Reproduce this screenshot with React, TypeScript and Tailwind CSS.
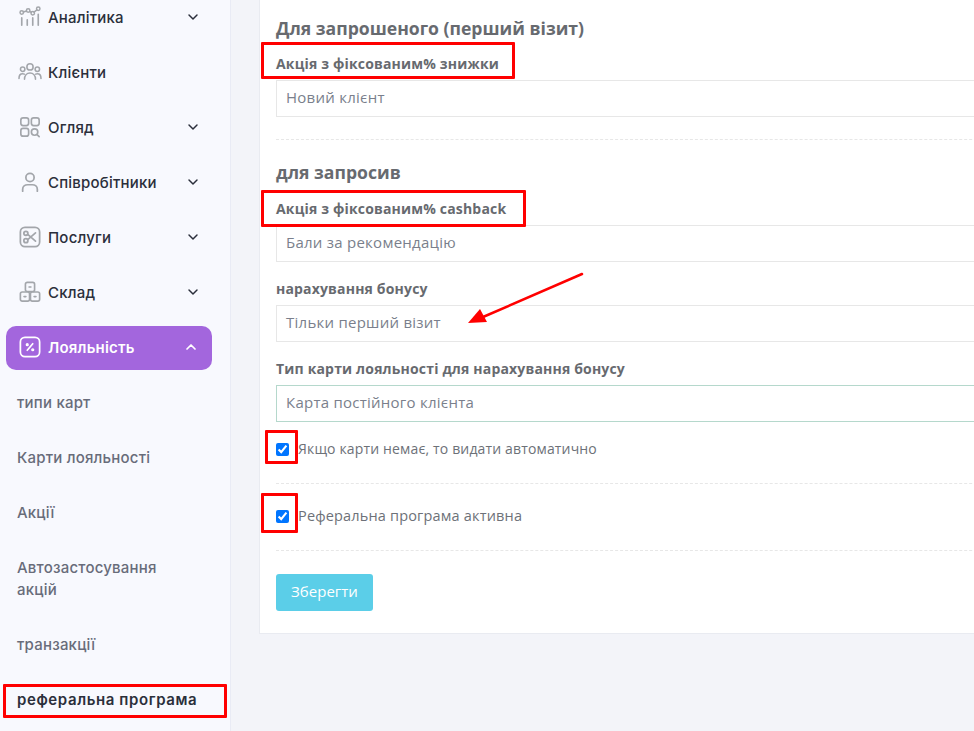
import { ChevronDown, ChevronUp } from "lucide-react";
import type { ReactNode } from "react";

const iconClass = "h-[22px] w-[22px] shrink-0";

function Analytics() {
  return (
    <svg viewBox="0 0 24 24" fill="none" stroke="#a3a6ab" strokeWidth="1.6" strokeLinecap="round" className={iconClass}>
      <circle cx="3" cy="7" r="1.9" />
      <circle cx="10" cy="5" r="1.9" />
      <circle cx="15" cy="8" r="1.9" />
      <circle cx="21" cy="3" r="1.9" />
      <path d="M4.8 6.5 8.2 5.5M11.7 6 13.4 7M16.4 6.7 19.5 4.2" />
      <path d="M3 13v8M9 15v6M15 13v8M21 9v12" strokeWidth="1.8" />
    </svg>
  );
}

function Clients() {
  return (
    <svg viewBox="0 0 26 24" fill="none" stroke="#a3a6ab" strokeWidth="1.7" strokeLinecap="round" className="-mx-[2px] h-[22px] w-[26px] shrink-0">
      <circle cx="13" cy="6.5" r="3.4" />
      <circle cx="5" cy="9" r="2.4" />
      <circle cx="21" cy="9" r="2.4" />
      <path d="M7 20c0-4 2.5-7 6-7s6 3 6 7" />
      <path d="M1 19c0-3 1.500-5 4-5 .7 0 1.300.1 1.800.4M25 19c0-3-1.500-5-4-5-.7 0-1.300.1-1.800.4" />
    </svg>
  );
}

function Overview() {
  return (
    <svg viewBox="0 0 24 24" fill="none" stroke="#a3a6ab" strokeWidth="1.8" strokeLinecap="round" className={iconClass}>
      <rect x="2" y="2" width="8.500" height="8.500" rx="2.500" />
      <rect x="13.500" y="2" width="8.500" height="8.500" rx="2.500" />
      <rect x="2" y="13.500" width="8.500" height="8.500" rx="2.500" />
      <circle cx="17" cy="17.500" r="3.500" />
      <path d="m20 20.500 2 2" />
    </svg>
  );
}

function Staff() {
  return (
    <svg viewBox="0 0 24 24" fill="none" stroke="#a3a6ab" strokeWidth="1.9" strokeLinecap="round" className={iconClass}>
      <circle cx="12" cy="7" r="4.500" />
      <path d="M4 22v-2c0-3 2.500-5 5.500-5h5c3 0 5.500 2 5.500 5v2" />
    </svg>
  );
}

function Services() {
  return (
    <svg viewBox="0 0 24 24" fill="none" stroke="#a3a6ab" strokeWidth="1.9" strokeLinecap="round" className={iconClass}>
      <rect x="1.500" y="1.500" width="21" height="21" rx="5" />
      <circle cx="7.500" cy="8" r="2.200" />
      <circle cx="7.500" cy="16" r="2.200" />
      <path d="M9.500 9.200 18 16.500M9.500 14.800 18 7.500" />
    </svg>
  );
}

function Stock() {
  return (
    <svg viewBox="0 0 24 24" fill="none" stroke="#a3a6ab" strokeWidth="1.800" strokeLinecap="round" className={iconClass}>
      <rect x="7" y="1.500" width="10" height="10" rx="2" />
      <rect x="1.500" y="12" width="10" height="10" rx="2" />
      <rect x="12.500" y="12" width="10" height="10" rx="2" />
      <path d="M11 6.500h2M5.500 17h2M16.500 17h2" />
    </svg>
  );
}

function Loyalty() {
  return (
    <svg viewBox="0 0 24 24" fill="none" stroke="#fff" strokeWidth="1.900" strokeLinecap="round" className={iconClass}>
      <rect x="1.500" y="1.500" width="21" height="21" rx="5" />
      <path d="m9 15.500 6-7" />
      <circle cx="9" cy="9.500" r=".8" />
      <circle cx="15" cy="15" r=".8" />
    </svg>
  );
}

const menu: { label: string; icon: ReactNode; chevron: boolean }[] = [
  { label: "Аналітика", icon: <Analytics />, chevron: true },
  { label: "Клієнти", icon: <Clients />, chevron: false },
  { label: "Огляд", icon: <Overview />, chevron: true },
  { label: "Співробітники", icon: <Staff />, chevron: true },
  { label: "Послуги", icon: <Services />, chevron: true },
  { label: "Склад", icon: <Stock />, chevron: true },
];

const subItems = ["типи карт", "Карти лояльності", "Акції", "Автозастосування акцій", "транзакції"];

function Sidebar() {
  return (
    <aside className="w-[231px] shrink-0 border-r border-[#e9ebf5] bg-[#f8f9fe] pl-[6px] pr-[18px] font-['Inter',sans-serif] text-[15px] tracking-[0.2px]">
      <div className="-mt-[4px] flex flex-col gap-[11px]">
        {menu.map((item) => (
          <div key={item.label} className="flex h-[44px] items-center gap-[7px] pb-[2px] pl-[13px] pr-[11px] font-medium text-[#2b2f3b]">
            {item.icon}
            <span className="flex-1 pt-[2px]">{item.label}</span>
            {item.chevron && <ChevronDown className="h-[16px] w-[16px] text-[#2b2f3b]" strokeWidth={2.2} />}
          </div>
        ))}
        <div className="flex h-[44px] items-center gap-[7px] rounded-[10px] bg-[#a366dd] pb-[2px] pl-[13px] pr-[13px] font-semibold text-white">
          <Loyalty />
          <span className="flex-1 pt-[2px]">Лояльність</span>
          <ChevronUp className="h-[16px] w-[16px]" strokeWidth={2.6} />
        </div>
      </div>
      <ul className="mt-[11px] flex flex-col gap-[11px] font-medium text-[#686c7a]">
        {subItems.map((item) => (
          <li key={item} className="py-[11px] pl-[11px] pr-[20px] leading-[22px]">
            {item}
          </li>
        ))}
        <li className="py-[11px] pl-[11px] leading-[22px] font-semibold tracking-[0.6px] text-[#2b2f3b] whitespace-nowrap">
          реферальна програма
        </li>
      </ul>
    </aside>
  );
}

function Field({ label, value, tinted }: { label: string; value: string; tinted?: boolean }) {
  return (
    <div>
      <label className="block text-[14px] leading-[20px] font-bold tracking-[0.17px] text-[#676a6f]">{label}</label>
      <div
        className={`mt-[6px] flex h-[37px] items-center border bg-white pb-[2px] pl-[9px] text-[15px] tracking-[0.25px] text-[#7a7f8c] ${
          tinted ? "border-[#b5d8cc]" : "border-[#e7e7e7]"
        }`}
      >
        {value}
      </div>
    </div>
  );
}

function Check({ label, className, textClass }: { label: string; className: string; textClass?: string }) {
  return (
    <label className={`flex h-[20px] items-center text-[#6d7178] ${className}`}>
      <input type="checkbox" defaultChecked className="m-0 mr-[9px] h-[13px] w-[13px] accent-[#0075ff]" />
      <span className={textClass}>{label}</span>
    </label>
  );
}

function Divider() {
  return <div className="border-t border-dashed border-[#e7e7e7]" />;
}

function Annotation({ className }: { className: string }) {
  return <div className={`absolute rounded-[1px] border-[3px] border-[#ff0000] ${className}`} />;
}

export default function App() {
  return (
    <div className="relative flex h-[731px] w-[974px] overflow-hidden bg-[#f3f4f9] font-['Open_Sans',sans-serif]">
      <Sidebar />
      <main className="min-w-0 flex-1 pl-[28px]">
        <section className="-mt-[1px] w-[800px] border border-t-0 border-[#e9ebf1] bg-white px-[16px] pt-[17px] pb-[22px]">
          <h2 className="text-[17.6px] leading-[24px] font-bold text-[#676a6f]">Для запрошеного (перший візит)</h2>
          <div className="mt-[14px]">
            <Field label="Акція з фіксованим% знижки" value="Новий клієнт" />
          </div>
          <div className="mt-[22px]">
            <Divider />
          </div>
          <h2 className="mt-[20px] text-[17.6px] leading-[24px] font-bold text-[#676a6f]">для запросив</h2>
          <div className="mt-[15px] flex flex-col gap-[17px]">
            <Field label="Акція з фіксованим% cashback" value="Бали за рекомендацію" />
            <Field label="нарахування бонусу" value="Тільки перший візит" />
            <Field label="Тип карти лояльності для нарахування бонусу" value="Карта постійного клієнта" tinted />
          </div>
          <div className="mt-[17px]">
            <Check label="Якщо карти немає, то видати автоматично" className="text-[14px] tracking-[0.15px]" textClass="pb-[2px]" />
          </div>
          <div className="mt-[24px]">
            <Divider />
          </div>
          <div className="mt-[22px]">
            <Check label="Реферальна програма активна" className="text-[14.5px] tracking-[0.17px]" />
          </div>
          <div className="mt-[24px]">
            <Divider />
          </div>
          <button className="mt-[23px] h-[37px] w-[97px] rounded-[3px] bg-[#5bcee8] pb-[2px] text-[15px] text-white">
            Зберегти
          </button>
        </section>
      </main>

      <Annotation className="left-[261px] top-[42px] h-[37px] w-[254px]" />
      <Annotation className="left-[261px] top-[190px] h-[37px] w-[265px]" />
      <Annotation className="left-[265px] top-[430px] h-[34px] w-[33px]" />
      <Annotation className="left-[261px] top-[493px] h-[40px] w-[37px]" />
      <Annotation className="left-[3px] top-[684px] h-[34px] w-[224px]" />

      <svg className="absolute left-[465px] top-[270px] h-[60px] w-[125px]" viewBox="0 0 125 60" fill="none">
        <path d="M117 4 18 47" stroke="#ff0000" strokeWidth="2.500" strokeLinecap="round" />
        <path d="M3 53 15 39l7 13z" fill="#ff0000" />
      </svg>
    </div>
  );
}
